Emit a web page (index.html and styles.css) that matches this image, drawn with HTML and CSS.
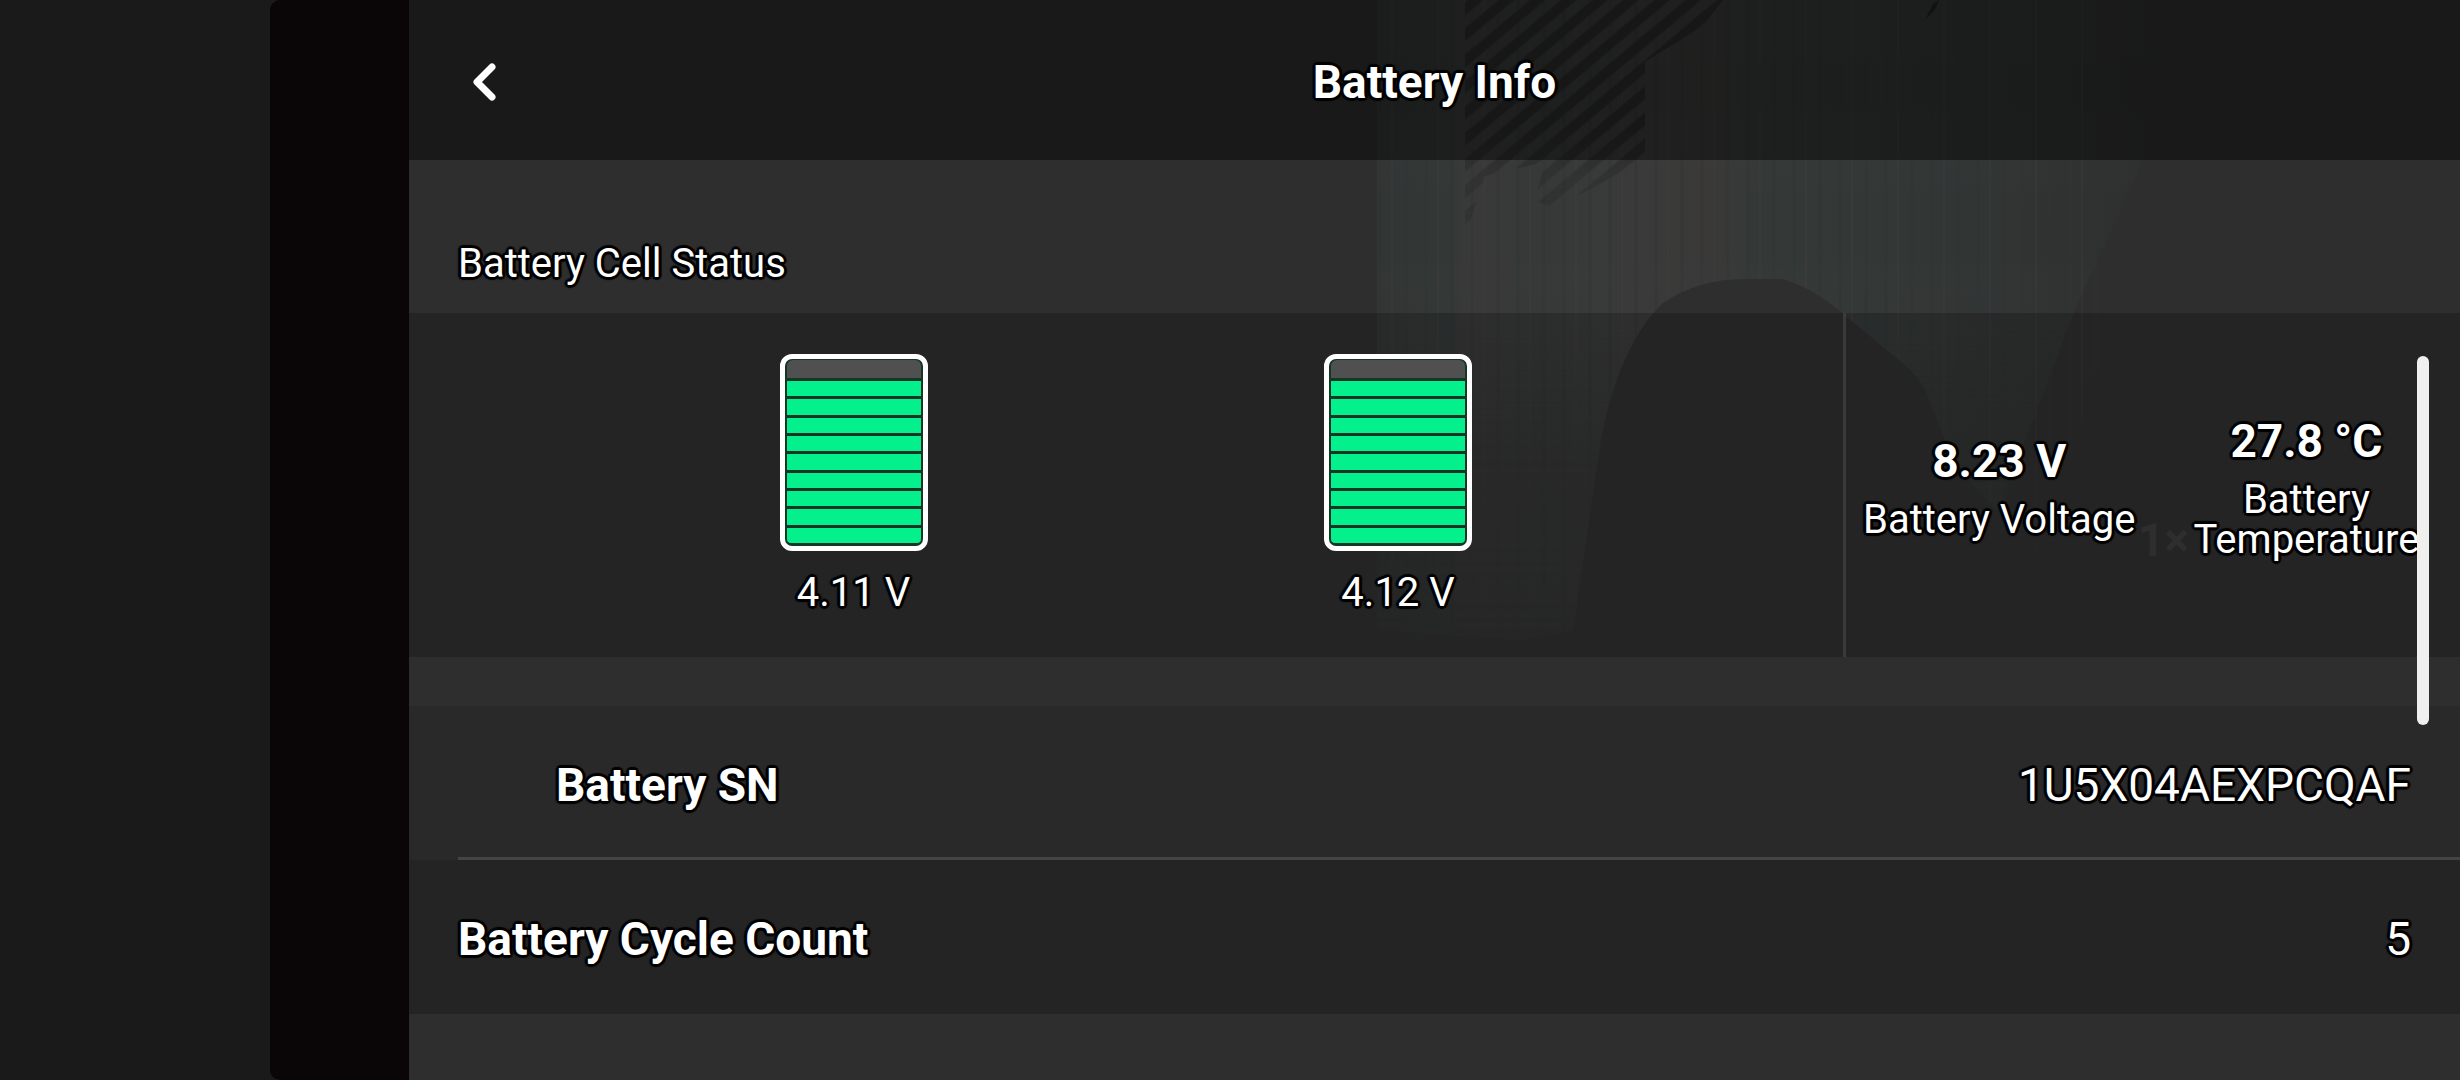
FILE: index.html
```html
<!DOCTYPE html>
<html lang="en">
<head>
    <meta charset="UTF-8">
    <meta name="viewport" content="width=device-width, initial-scale=1.0">
    <title>Battery Info</title>
    <link rel="stylesheet" href="styles.css">
</head>
<body>
    <div class="camera-edge"></div>
    <main class="panel">
        <!-- camera view showing through the panel -->
        <svg class="scene" viewBox="0 0 2051 1080" preserveAspectRatio="xMaxYMin slice" aria-hidden="true">
            <defs>
                <linearGradient id="fadeDown" x1="0" y1="0" x2="0" y2="1">
                    <stop offset="0" stop-color="#fff"/>
                    <stop offset="0.5" stop-color="#fff" stop-opacity="0.95"/>
                    <stop offset="0.7" stop-color="#fff" stop-opacity="0.5"/>
                    <stop offset="1" stop-color="#fff" stop-opacity="0.2"/>
                </linearGradient>
                <linearGradient id="curtain" x1="0" y1="0" x2="1" y2="0">
                    <stop offset="0" stop-color="#323635"/>
                    <stop offset="0.09" stop-color="#343938"/>
                    <stop offset="0.11" stop-color="#3b3a3a"/>
                    <stop offset="0.2" stop-color="#373a39"/>
                    <stop offset="0.32" stop-color="#3b3b3b"/>
                    <stop offset="0.42" stop-color="#3b3a39"/>
                    <stop offset="0.46" stop-color="#353a38"/>
                    <stop offset="0.6" stop-color="#343938"/>
                    <stop offset="0.75" stop-color="#323635"/>
                    <stop offset="0.9" stop-color="#303131"/>
                    <stop offset="1" stop-color="#2e2e2e"/>
                </linearGradient>
                <linearGradient id="fadeBlinds" x1="0" y1="0" x2="0" y2="1">
                    <stop offset="0.5" stop-color="#fff"/>
                    <stop offset="0.7" stop-color="#fff" stop-opacity="0.5"/>
                    <stop offset="1" stop-color="#fff" stop-opacity="0.3"/>
                </linearGradient>
                <mask id="fade">
                    <rect x="968" y="0" width="820" height="650" fill="url(#fadeDown)"/>
                </mask>
                <mask id="blindsMask">
                    <rect x="1056" y="0" width="280" height="256" fill="url(#fadeBlinds)"/>
                </mask>
                <pattern id="folds" width="46" height="40" patternUnits="userSpaceOnUse">
                    <path d="M5 0v40M31 0v40" stroke="#2b3431" stroke-width="3" opacity="0.4"/>
                    <path d="M17 0v40" stroke="#444" stroke-width="2" opacity="0.25"/>
                </pattern>
                <pattern id="blinds" width="20" height="20" patternUnits="userSpaceOnUse" patternTransform="rotate(-40)">
                    <rect y="1" width="20" height="9" fill="#2b2b2b"/>
                    <rect width="20" height="11" fill="#2b2b2b" opacity="0.5"/>
                </pattern>
            </defs>
            <g mask="url(#fade)">
                <path d="M968 0h812l-50 170-60 130-100 260-460 80-142-10z" fill="url(#curtain)"/>
                <path d="M968 0h730v330l-60 220-500 90-170-30z" fill="url(#folds)"/>
                <g mask="url(#blindsMask)">
                    <path d="M1056 0h258l-20 26-58 36v96l-52 30-42 20-16-8 10-38-60 14-20 60v20z" fill="url(#blinds)"/>
                </g>
            </g>
            <path d="M1160 660L1192 440Q1210 345 1254 303Q1290 279 1335 279H1373Q1400 286 1427 308L1497 366Q1516 384 1520 400L1535 437Q1550 480 1600 520V660z" fill="#2e2e2e"/>
            <path d="M1524 4l6-4-4 10-10 10z" fill="#222"/>
            <text class="zoom-level" x="1729" y="556">1×</text>
        </svg>

        <header class="header">
            <button class="back" type="button" aria-label="Back">
                <svg viewBox="0 0 30 44" width="30" height="44" aria-hidden="true">
                    <path d="M23 7L8 22l15 15" fill="none" stroke="#fff" stroke-width="7" stroke-linecap="round" stroke-linejoin="round"/>
                </svg>
            </button>
            <h1>Battery Info</h1>
        </header>

        <h2 class="section-title">Battery Cell Status</h2>

        <section class="status">
            <div class="cells">
                <div class="cell">
                    <div class="battery">
                        <i class="empty"></i>
                        <i></i><i></i><i></i><i></i><i></i><i></i><i></i><i></i><i></i>
                    </div>
                    <span>4.11 V</span>
                </div>
                <div class="cell">
                    <div class="battery">
                        <i class="empty"></i>
                        <i></i><i></i><i></i><i></i><i></i><i></i><i></i><i></i><i></i>
                    </div>
                    <span>4.12 V</span>
                </div>
            </div>
            <div class="readings">
                <div class="reading">
                    <strong>8.23 V</strong>
                    <span>Battery Voltage</span>
                </div>
                <div class="reading">
                    <strong>27.8 °C</strong>
                    <span>Battery Temperature</span>
                </div>
            </div>
        </section>

        <section class="details">
            <div class="row row-sn">
                <span class="label">Battery SN</span>
                <span>1U5X04AEXPCQAF</span>
            </div>
            <div class="row">
                <span class="label">Battery Cycle Count</span>
                <span>5</span>
            </div>
        </section>

        <div class="scrollbar"></div>
    </main>
</body>
</html>
```
FILE: styles.css
```css
* {
    box-sizing: border-box;
}
body {
    margin: 0;
    display: flex;
    min-height: 100vh;
    background-color: #191a19;
    color: #fff;
    font-family: Roboto, sans-serif;
    font-size: 40px;
    line-height: 40px;
    padding-left: 270px;
    text-shadow: 3px 0 1px #000, -3px 0 1px #000, 0 3px 1px #000, 0 -3px 1px #000,
        2px 2px 1px #000, -2px 2px 1px #000, 2px -2px 1px #000, -2px -2px 1px #000;
}
.camera-edge {
    flex: 0 0 139px;
    background-color: #0a0507;
    border-radius: 10px 0 0 10px;
}
.panel {
    position: relative;
    flex: 1;
    min-width: 0;
    overflow: hidden;
    background-color: #2e2e2e;
    isolation: isolate;
}
.scene {
    position: absolute;
    top: 0;
    right: 0;
    width: 100%;
    height: 100%;
    z-index: -1;
}
.zoom-level {
    fill: #3a3a3a;
    font-size: 46px;
    font-weight: bold;
    text-shadow: none;
}
.header {
    display: grid;
    grid-template-columns: 100px 1fr 100px;
    align-items: center;
    height: 160px;
    padding-top: 3px;
    background-color: rgba(0, 0, 0, 0.45);
}
.back {
    display: flex;
    justify-content: flex-end;
    align-items: center;
    height: 96px;
    padding: 0 10px 0 0;
    border: none;
    background: none;
    cursor: pointer;
}
h1 {
    margin: 0;
    font-size: 46px;
    line-height: 54px;
    font-weight: bold;
    text-align: center;
}
.section-title {
    margin: 0;
    padding: 84px 49px 29px;
    font-size: 40px;
    font-weight: normal;
}
.status {
    display: grid;
    grid-template-columns: 7fr 3px 3fr;
    background-color: rgba(0, 0, 0, 0.2);
}
.status::before {
    content: "";
    grid-column: 2;
    grid-row: 1;
    background-color: #3a3a3a;
}
.cells {
    grid-column: 1;
    grid-row: 1;
    display: flex;
    justify-content: space-evenly;
    padding: 41px 0 44px;
}
.cell {
    display: flex;
    flex-direction: column;
    align-items: center;
    gap: 22px;
    width: 200px;
}
.battery {
    display: flex;
    flex-direction: column;
    gap: 3px;
    width: 148px;
    height: 197px;
    padding: 1px 2px 3px;
    border: 5px solid #fff;
    border-radius: 12px;
    background-color: #173524;
}
.battery i {
    flex: 1;
    background-color: #04f08c;
}
.battery i:last-child {
    border-radius: 0 0 4px 4px;
}
.battery .empty {
    flex: 0 0 18px;
    border-radius: 6px 6px 0 0;
    background-color: #505050;
}
.readings {
    grid-column: 3;
    grid-row: 1;
    display: flex;
    padding-top: 3px;
}
.reading {
    flex: 1 1 0;
    min-width: 0;
    display: flex;
    flex-direction: column;
    justify-content: center;
    gap: 12px;
    text-align: center;
}
.reading strong {
    font-size: 46px;
    line-height: 54px;
}
.details {
    margin-top: 49px;
}
.row {
    display: flex;
    justify-content: space-between;
    align-items: center;
    height: 154px;
    padding: 3px 49px 0;
    background-color: rgba(0, 0, 0, 0.2);
    font-size: 46px;
    line-height: 54px;
}
.row-sn {
    padding-left: 147px;
    background-color: rgba(0, 0, 0, 0.1);
    background-image: linear-gradient(#444, #444);
    background-repeat: no-repeat;
    background-position: 49px 100%;
    background-size: 100% 3px;
}
.label {
    font-weight: bold;
}
.scrollbar {
    position: absolute;
    top: 356px;
    right: 31px;
    width: 12px;
    height: 369px;
    border-radius: 6px;
    background-color: #efefef;
}
```
